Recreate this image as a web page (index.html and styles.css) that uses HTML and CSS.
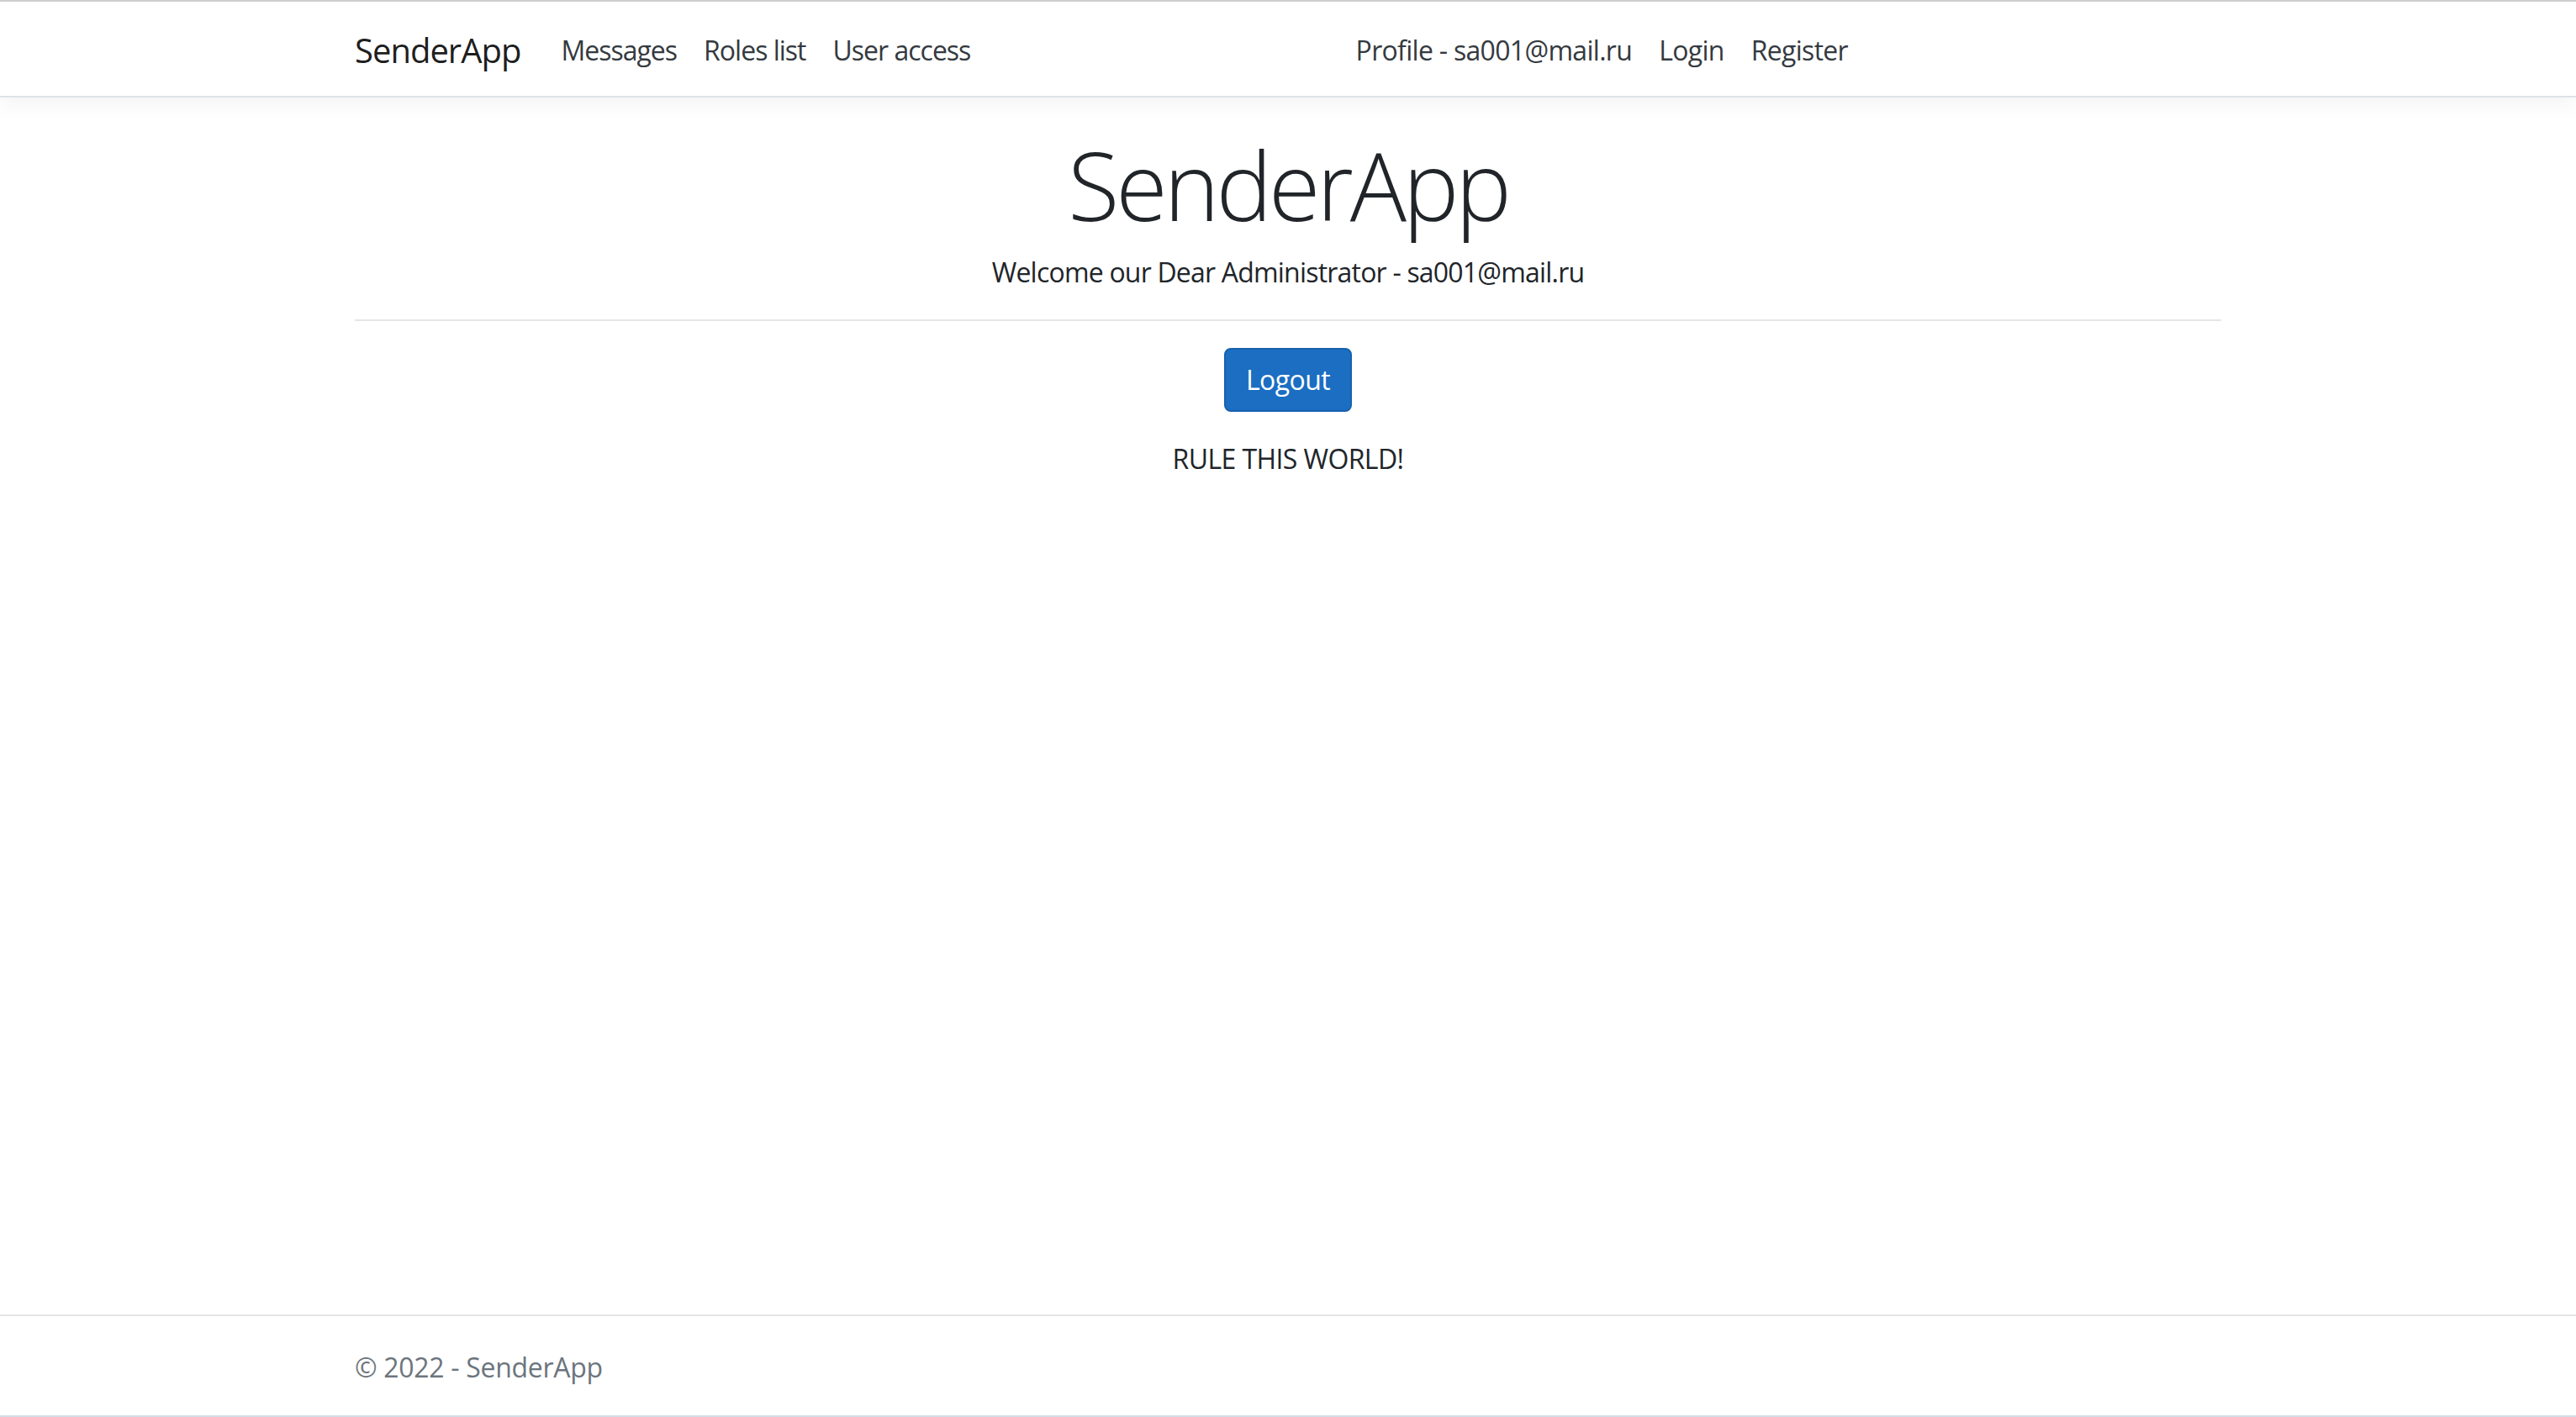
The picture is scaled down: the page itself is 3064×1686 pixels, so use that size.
FILE: index.html
```html
<!DOCTYPE html>
<html lang="en">
<head>
<meta charset="utf-8">
<title>SenderApp</title>
<link rel="stylesheet" href="styles.css">
</head>
<body>
<header class="site-header">
  <nav class="navbar">
    <div class="container nav-row">
      <a class="brand" href="#">SenderApp</a>
      <ul class="nav-list nav-left">
        <li><a class="nav-link" href="#">Messages</a></li>
        <li><a class="nav-link" href="#">Roles list</a></li>
        <li><a class="nav-link" href="#">User access</a></li>
      </ul>
      <ul class="nav-list nav-right">
        <li><a class="nav-link" href="#">Profile - sa001@mail.ru</a></li>
        <li><a class="nav-link" href="#">Login</a></li>
        <li><a class="nav-link" href="#">Register</a></li>
      </ul>
    </div>
  </nav>
</header>
<main class="container main">
  <div class="text-center">
    <h1 class="display">SenderApp</h1>
    <p class="lead-p">Welcome our Dear Administrator - sa001@mail.ru</p>
    <hr class="divider">
    <form class="logout-form">
      <button type="button" class="btn-primary">Logout</button>
    </form>
    <p class="motto">RULE THIS WORLD!</p>
  </div>
</main>
<footer class="footer">
  <div class="container footer-text">&copy; 2022 - SenderApp</div>
</footer>
</body>
</html>
```

FILE: styles.css
```css
html, body {
  height: 100%;
}
* { box-sizing: border-box; }
body {
  margin: 0;
  min-height: 100vh;
  display: flex;
  flex-direction: column;
  font-family: "Open Sans", "Noto Sans", "Liberation Sans", sans-serif;
  font-size: 32px;
  line-height: 1.5;
  color: #212529;
  background: #fff;
  border-top: 2px solid #cdcdcd;
}
.container {
  width: 2280px;
  margin: 0 auto;
  padding: 0 30px;
}
.site-header {
  margin-bottom: 32px;
}
.navbar {
  padding: 16px 32px;
  background: #fff;
  border-bottom: 2px solid #dee2e6;
  box-shadow: 0 8px 24px rgba(0, 0, 0, 0.05);
}
.nav-row {
  display: flex;
  align-items: center;
}
.brand {
  font-size: 40px;
  padding: 12px 0 8px;
  margin-right: 32px;
  color: rgba(0, 0, 0, 0.9);
  text-decoration: none;
  line-height: 60px;
  letter-spacing: -1px;
}
.nav-list {
  list-style: none;
  margin: 0;
  padding: 0;
  display: flex;
}
.nav-left {
  flex: 1;
}
.nav-right {
  margin-right: 428px;
}
.nav-link {
  display: block;
  padding: 18px 16px 14px;
  color: #343a40;
  text-decoration: none;
  letter-spacing: -1px;
}
.nav-right .nav-link {
  letter-spacing: -0.7px;
}
.main {
  flex: 1;
  padding-bottom: 32px;
}
.text-center {
  text-align: center;
}
.display {
  margin: 0 0 6px;
  font-size: 112px;
  font-weight: 300;
  line-height: 144px;
  letter-spacing: -4.2px;
}
.lead-p {
  margin: 0 0 32px;
  padding-top: 2px;
  letter-spacing: -0.8px;
}
.divider {
  margin: 26px 0 32px;
  border: 0;
  border-top: 2px solid rgba(0, 0, 0, 0.1);
}
.logout-form {
  margin: 0 0 32px;
}
.btn-primary {
  font-family: inherit;
  font-size: 32px;
  line-height: 48px;
  padding: 12px 24px;
  color: #fff;
  background: #1b6ec2;
  border: 2px solid #1861ac;
  border-radius: 8px;
  letter-spacing: -0.6px;
}
.motto {
  margin: 3px 0 32px;
  letter-spacing: -0.6px;
}
.footer {
  border-top: 2px solid #e5e5e5;
  line-height: 118px;
  white-space: nowrap;
  color: #6c757d;
  box-shadow: inset 0 -2px 0 #d3dde6;
}
.footer-text {
  padding-top: 2px;
  letter-spacing: -0.3px;
}
```
